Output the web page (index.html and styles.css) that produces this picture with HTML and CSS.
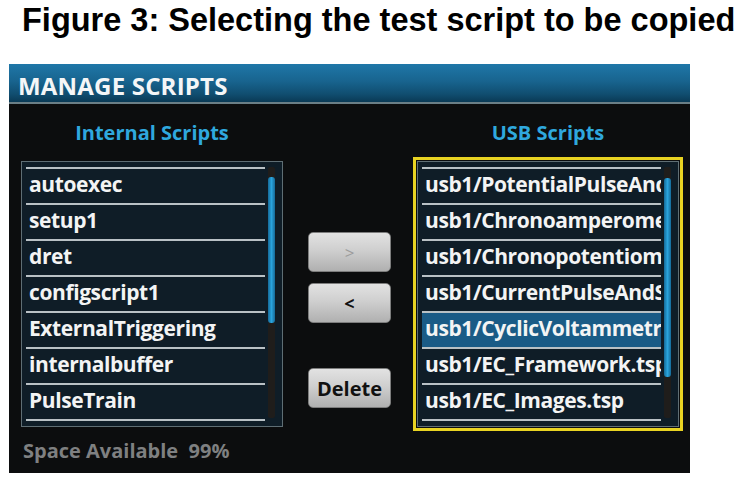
FILE: index.html
```html
<!DOCTYPE html>
<html>
<head>
<meta charset="utf-8">
<link rel="stylesheet" href="styles.css">
</head>
<body>
<h1 class="fig-title">Figure 3: Selecting the test script to be copied</h1>
<div class="panel">
  <div class="panel-head">MANAGE SCRIPTS</div>
  <div class="panel-body">
    <div class="col">
      <div class="col-title">Internal Scripts</div>
      <div class="frame">
        <div class="listbox">
          <ul class="rows">
            <li class="row">autoexec</li>
            <li class="row">setup1</li>
            <li class="row">dret</li>
            <li class="row">configscript1</li>
            <li class="row">ExternalTriggering</li>
            <li class="row">internalbuffer</li>
            <li class="row">PulseTrain</li>
            <li class="row end"></li>
          </ul>
          <div class="track"><div class="thumb thumb-left"></div></div>
        </div>
      </div>
    </div>
    <div class="mid">
      <button class="btn btn-disabled">&gt;</button>
      <button class="btn btn-arrow">&lt;</button>
      <button class="btn btn-delete">Delete</button>
    </div>
    <div class="col">
      <div class="col-title">USB Scripts</div>
      <div class="frame frame-sel">
        <div class="listbox">
          <ul class="rows">
            <li class="row">usb1/PotentialPulseAndSquareWave.tsp</li>
            <li class="row">usb1/Chronoamperometry.tsp</li>
            <li class="row">usb1/Chronopotentiometry.tsp</li>
            <li class="row">usb1/CurrentPulseAndSquareWave.tsp</li>
            <li class="row selected">usb1/CyclicVoltammetry.tsp</li>
            <li class="row">usb1/EC_Framework.tsp</li>
            <li class="row">usb1/EC_Images.tsp</li>
            <li class="row end"></li>
          </ul>
          <div class="track"><div class="thumb thumb-right"></div></div>
        </div>
      </div>
    </div>
  </div>
  <div class="space">Space Available&nbsp; 99%</div>
</div>
</body>
</html>
```
FILE: styles.css
```css
html, body {
  margin: 0;
  padding: 0;
  background: #ffffff;
}

.fig-title {
  margin: 0 0 24px 0;
  padding-left: 22px;
  height: 40px;
  font: 700 32.5px/40px "Liberation Sans", Arial, sans-serif;
  color: #000;
  white-space: nowrap;
}

.panel {
  margin-left: 9px;
  width: 681px;
  height: 409px;
  background: #0c0d0e;
  font-family: "Open Sans", "Noto Sans", sans-serif;
  font-weight: 700;
  display: flex;
  flex-direction: column;
}

.panel-head {
  box-sizing: border-box;
  height: 40px;
  padding: 5px 0 0 9px;
  line-height: 33px;
  font-size: 24px;
  color: #f4f6f7;
  letter-spacing: 0.2px;
  background: linear-gradient(#1f77a8 0%, #18648f 45%, #104d6f 80%, #0a3a55 100%);
  border-bottom: 2px solid #6b7f86;
}

.panel-body {
  display: flex;
  padding-left: 8px;
}

.col {
  width: 270px;
  display: flex;
  flex-direction: column;
}

.col-title {
  box-sizing: border-box;
  height: 53px;
  padding-top: 15px;
  line-height: 27px;
  font-size: 20px;
  color: #2fa8de;
  text-align: center;
}

.frame {
  padding: 4px;
}

.frame-sel {
  padding: 1px;
  border: 3px solid #e9d322;
}

.listbox {
  box-sizing: border-box;
  height: 266px;
  border: 1px solid #5f6e74;
  background: #0f1d27;
  padding: 5px 7px 0 4px;
  display: flex;
  align-items: flex-start;
}

.rows {
  list-style: none;
  margin: 0;
  padding: 0;
  width: 239px;
}

.row {
  box-sizing: border-box;
  height: 36px;
  border-top: 2px solid #b9c1c5;
  padding: 0 0 0 3px;
  line-height: 30px;
  font-size: 21px;
  letter-spacing: -0.4px;
  color: #f3f4f4;
  white-space: nowrap;
  overflow: hidden;
}

.row.end {
  height: 2px;
  padding: 0;
}

.row.selected {
  background: #1a5b86;
}

.track {
  margin-left: 3px;
  width: 7px;
  height: 251px;
  background: #1f1d1b;
  border-radius: 2px;
  position: relative;
}

.thumb {
  position: absolute;
  left: 0;
  width: 7px;
  border-radius: 3px;
  background: linear-gradient(90deg, #156a98 0%, #2aa4dd 50%, #156a98 100%);
}

.thumb-left {
  top: 10px;
  height: 146px;
}

.thumb-right {
  top: 11px;
  height: 199px;
}

.mid {
  width: 126px;
  padding: 128px 0 0 21px;
  box-sizing: border-box;
  display: flex;
  flex-direction: column;
  align-items: flex-start;
}

.btn {
  width: 83px;
  height: 40px;
  border: 1px solid #7d7d7d;
  border-radius: 5px;
  background: linear-gradient(#e2e2e2 0%, #cfcfcf 45%, #b0b0b0 100%);
  font-family: "Open Sans", "Noto Sans", sans-serif;
  font-weight: 700;
  color: #111;
  padding: 0;
  margin: 0;
}

.btn-disabled {
  font-size: 17px;
  color: #9c9c9c;
  font-weight: 400;
}

.btn-arrow {
  margin-top: 11px;
  font-size: 18px;
}

.btn-delete {
  margin-top: 45px;
  font-size: 20px;
}

.space {
  margin-top: 6px;
  padding-left: 14px;
  line-height: 27px;
  font-size: 20px;
  color: #7f8081;
}
```
